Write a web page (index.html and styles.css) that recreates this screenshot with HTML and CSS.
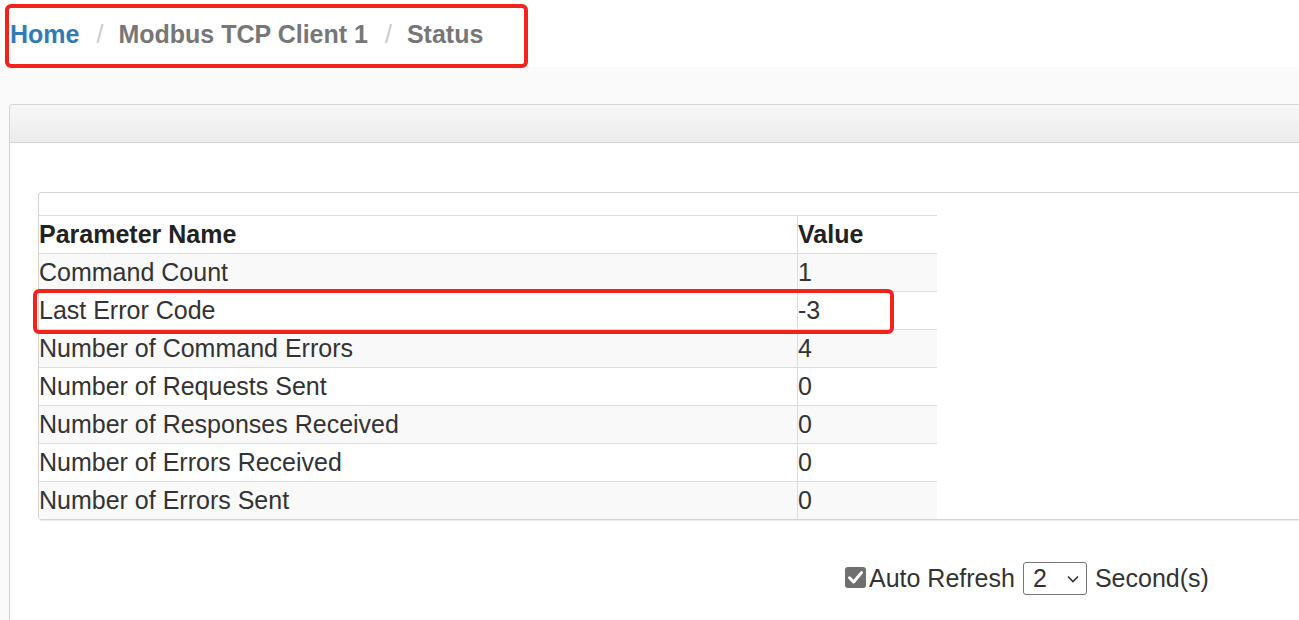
FILE: index.html
```html
<!DOCTYPE html>
<html>
<head>
<meta charset="utf-8">
<link rel="stylesheet" href="styles.css">
</head>
<body>
<div class="crumbs">
  <a class="crumb-link" href="#">Home</a>
  <span class="sep">/</span>
  <span class="crumb">Modbus TCP Client 1</span>
  <span class="sep">/</span>
  <span class="crumb">Status</span>
  <div class="mark mark-crumbs"></div>
</div>
<div class="page">
  <div class="panel">
    <div class="panel-heading"></div>
    <div class="panel-body">
      <div class="box">
        <div class="box-top"></div>
        <div class="table-wrap">
          <table class="status">
            <thead>
              <tr><th class="c-name">Parameter Name</th><th class="c-val">Value</th></tr>
            </thead>
            <tbody>
              <tr class="odd"><td>Command Count</td><td class="val">1</td></tr>
              <tr><td>Last Error Code</td><td class="val">-3</td></tr>
              <tr class="odd"><td>Number of Command Errors</td><td class="val">4</td></tr>
              <tr><td>Number of Requests Sent</td><td class="val">0</td></tr>
              <tr class="odd"><td>Number of Responses Received</td><td class="val">0</td></tr>
              <tr><td>Number of Errors Received</td><td class="val">0</td></tr>
              <tr class="odd"><td>Number of Errors Sent</td><td class="val">0</td></tr>
            </tbody>
          </table>
          <div class="mark mark-row"></div>
        </div>
      </div>
      <div class="refresh">
        <span class="chk"><svg width="21" height="21" viewBox="0 0 21 21"><path d="M4.5 10.8 L8.6 15 L16.5 5.6" fill="none" stroke="#fff" stroke-width="3" stroke-linecap="round" stroke-linejoin="round"/></svg></span>
        <span class="lbl">Auto Refresh</span>
        <span class="sel"><span class="sel-val">2</span><svg class="chev" width="12" height="8" viewBox="0 0 12 8"><path d="M1 1.5 L6 6.5 L11 1.5" fill="none" stroke="#333" stroke-width="1.6"/></svg></span>
        <span class="lbl">Second(s)</span>
      </div>
    </div>
  </div>
</div>
</body>
</html>
```

FILE: styles.css
```css
html, body {
  margin: 0;
  padding: 0;
}
body {
  font-family: "Liberation Sans", Arial, sans-serif;
  color: #333;
  background: #fafafa;
  height: 620px;
  overflow: hidden;
}
.crumbs {
  position: relative;
  height: 67px;
  background: #fff;
  display: flex;
  align-items: center;
  padding-left: 10px;
  padding-top: 2px;
  font-size: 25px;
  font-weight: bold;
  box-sizing: border-box;
}
.crumb-link {
  color: #337ab7;
  text-decoration: none;
}
.sep {
  color: #ccc;
  font-weight: normal;
  padding: 0 15px 0 17px;
}
.crumb {
  color: #777;
}
.mark {
  position: absolute;
  border: 4px solid #f2231d;
  border-radius: 6px;
  box-sizing: border-box;
}
.mark-crumbs {
  left: 5px;
  top: 4px;
  width: 523px;
  height: 64px;
}
.page {
  padding-top: 37px;
  padding-left: 9px;
}
.panel {
  background: #fff;
  border: 1px solid #d4d4d4;
  border-right: none;
  border-bottom: none;
  border-top-left-radius: 4px;
  height: 520px;
}
.panel-heading {
  height: 37px;
  background: linear-gradient(#f7f7f7, #ececec);
  border-bottom: 1px solid #d0d0d0;
  border-top-left-radius: 4px;
}
.panel-body {
  padding: 49px 0 0 28px;
}
.box {
  border: 1px solid #d4d4d4;
  border-right: none;
  border-radius: 4px 0 0 4px;
  box-shadow: 0 1px 1px rgba(0, 0, 0, 0.08);
}
.box-top {
  height: 22px;
}
.table-wrap {
  position: relative;
}
.status {
  border-collapse: collapse;
  width: 898px;
  font-size: 25px;
}
.status th, .status td {
  border-top: 1px solid #dcdcdc;
  height: 37px;
  padding: 0;
  text-align: left;
  vertical-align: middle;
  line-height: 37px;
  white-space: nowrap;
}
.status th {
  font-weight: bold;
  color: #222;
}
.c-name {
  width: 758px;
}
.status .c-val, .status .val {
  border-left: 1px solid #dcdcdc;
}
.status tr.odd td {
  background: #f9f9f9;
}
.mark-row {
  left: -6px;
  top: 74px;
  width: 861px;
  height: 45px;
}
.refresh {
  display: flex;
  align-items: center;
  margin-top: 42px;
  padding-left: 807px;
  font-size: 25px;
  color: #333;
}
.chk {
  width: 21px;
  height: 21px;
  background: #6f6f6f;
  border-radius: 3px;
  display: inline-flex;
  margin-right: 3px;
  margin-top: -2px;
}
.sel {
  display: inline-flex;
  align-items: center;
  justify-content: space-between;
  box-sizing: border-box;
  width: 64px;
  height: 33px;
  border: 1px solid #767676;
  border-radius: 3px;
  margin: 0 8px 0 8px;
  padding: 0 7px 0 9px;
  background: #fff;
}
.sel-val {
  line-height: 31px;
}
.chev {
  display: block;
}
```
